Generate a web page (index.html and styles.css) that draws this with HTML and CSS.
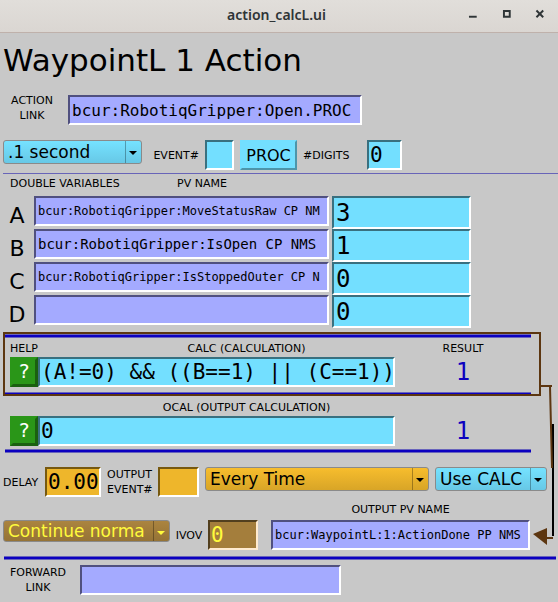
FILE: index.html
```html
<!DOCTYPE html>
<html lang="en">
<head>
<meta charset="utf-8">
<title>action_calcL.ui</title>
<link rel="stylesheet" href="styles.css">
</head>
<body>
<header class="titlebar">
  <span class="caption">action_calcL.ui</span>
  <div class="window-buttons">
    <button type="button" aria-label="Minimize"><svg viewBox="0 0 10 10"><path d="M1 7h8v2H1z"/></svg></button>
    <button type="button" aria-label="Maximize"><svg viewBox="0 0 10 10"><path fill-rule="evenodd" d="M1 1h8v8H1zM3 3v4h4V3z"/></svg></button>
    <button type="button" aria-label="Close"><svg viewBox="0 0 10 10"><path class="cross" d="M1.500 1.500l7 7M8.500 1.500l-7 7"/></svg></button>
  </div>
</header>
<main>
  <h1>WaypointL 1 Action</h1>

  <div class="action-row">
    <label for="action-link">ACTION<br>LINK</label>
    <input id="action-link" class="field link text-l" value="bcur:RobotiqGripper:Open.PROC">
  </div>

  <div class="scan-row">
    <div class="combo calc"><select aria-label="Scan rate"><option>.1 second</option></select></div>
    <label for="event" class="end">EVENT#</label>
    <input id="event" class="field calc">
    <button type="button" class="proc">PROC</button>
    <label for="digits" class="start">#DIGITS</label>
    <input id="digits" class="field calc text-xl" value="0">
  </div>
  <hr class="thin">

  <section class="variables">
    <div class="variable-heads"><span>DOUBLE VARIABLES</span><span>PV NAME</span></div>
    <div class="variable">
      <label for="pv-a">A</label>
      <input id="pv-a" class="field link text-s" value="bcur:RobotiqGripper:MoveStatusRaw CP NM">
      <input aria-label="Value of A" class="field calc tall" value="3">
    </div>
    <div class="variable">
      <label for="pv-b">B</label>
      <input id="pv-b" class="field link text-m" value="bcur:RobotiqGripper:IsOpen CP NMS">
      <input aria-label="Value of B" class="field calc tall" value="1">
    </div>
    <div class="variable">
      <label for="pv-c">C</label>
      <input id="pv-c" class="field link text-s" value="bcur:RobotiqGripper:IsStoppedOuter CP N">
      <input aria-label="Value of C" class="field calc tall" value="0">
    </div>
    <div class="variable">
      <label for="pv-d">D</label>
      <input id="pv-d" class="field link text-s">
      <input aria-label="Value of D" class="field calc tall" value="0">
    </div>
  </section>

  <div class="output-flow">
    <section class="calculation boxed">
      <hr class="rule">
      <div class="formula">
        <span>HELP</span><label for="calc">CALC (CALCULATION)</label><span>RESULT</span>
        <button type="button" class="help" aria-label="Help on CALC">?</button>
        <input id="calc" class="field calc text-xl" value="(A!=0) &amp;&amp; ((B==1) || (C==1))">
        <output for="calc">1</output>
      </div>
      <hr class="rule half">
    </section>

    <section class="calculation">
      <div class="formula">
        <span></span><label for="ocal">OCAL (OUTPUT CALCULATION)</label><span></span>
        <button type="button" class="help" aria-label="Help on OCAL">?</button>
        <input id="ocal" class="field calc text-xl" value="0">
        <output for="ocal">1</output>
      </div>
      <hr class="rule">
    </section>

    <div class="delay-row">
      <label for="delay" class="start">DELAY</label>
      <input id="delay" class="field output text-xl" value="0.00">
      <label for="out-event">OUTPUT<br>EVENT#</label>
      <input id="out-event" class="field output">
      <div class="combo output"><select aria-label="Output execute option"><option>Every Time</option></select></div>
      <div class="combo calc"><select aria-label="Output data option"><option>Use CALC</option></select></div>
    </div>

    <div class="invalid-row">
      <label for="out-pv" class="pv-label">OUTPUT PV NAME</label>
      <div class="combo invalid"><select aria-label="Invalid output action"><option>Continue norma</option></select></div>
      <label for="ivov">IVOV</label>
      <input id="ivov" class="field invalid text-xl" value="0">
      <input id="out-pv" class="field link text-s pv" value="bcur:WaypointL:1:ActionDone PP NMS">
    </div>

    <svg class="connector" viewBox="0 0 26 164" aria-hidden="true">
      <path class="black" d="M21 40V152"/>
      <path class="brown" d="M9 2H20M18 2L20 84M14 154H21"/>
      <path class="head" d="M1 150L15 144V161Z"/>
    </svg>
  </div>
  <hr class="rule wide">

  <div class="forward-row">
    <label for="forward">FORWARD<br>LINK</label>
    <input id="forward" class="field link text-l">
  </div>
</main>
</body>
</html>
```
FILE: styles.css
```css
* {
  box-sizing: border-box;
}

body {
  margin: 0;
  min-height: 100vh;
  background: #c8c8c8;
  color: #000;
  font: 11px/15px "DejaVu Sans", sans-serif;
}

button,
input,
select {
  margin: 0;
  min-width: 0;
  border-radius: 0;
  color: inherit;
  font: inherit;
}

/* Window frame */
.titlebar {
  display: grid;
  grid-template-columns: 85px 1fr 85px;
  align-items: center;
  height: 33px;
  padding-right: 5px;
  border-bottom: 1px solid #bfb1ab;
  background: linear-gradient(#e1deda, #dad6d2);
  color: #2e3436;
}

.caption {
  grid-column: 2;
  padding-bottom: 2px;
  font: 600 14px/20px "Noto Sans", sans-serif;
  text-align: center;
}

.window-buttons {
  display: flex;
  gap: 24px;
  justify-content: flex-end;
  padding: 0 8px 4px 0;
}

.window-buttons button {
  width: 10px;
  height: 10px;
  padding: 0;
  border: 0;
  background: none;
}

.window-buttons svg {
  display: block;
  fill: #2e3436;
}

.window-buttons .cross {
  fill: none;
  stroke: #2e3436;
  stroke-width: 2;
}

h1 {
  margin: 0;
  padding: 9px 3px 0;
  font-size: 31px;
  font-weight: 400;
  line-height: 36px;
}

label {
  text-align: center;
}

.start {
  text-align: left;
}

.end {
  text-align: right;
}

/* Sunken text fields */
.field {
  width: 100%;
  height: 30px;
  padding: 0 2px;
  border: 2px solid;
  font-family: "DejaVu Sans Mono", monospace;
}

.text-s { font-size: 12px; }
.text-m { font-size: 14px; }
.text-l { font-size: 16px; }
.text-xl { font-size: 21px; }

.field.link {
  border-color: #50507f #fff #fff #50507f;
  background: #a4aaff;
}

.field.calc {
  border-color: #39707f #fff #fff #39707f;
  background: #73dfff;
}

.field.output {
  border-color: #77590f #fff #fff #77590f;
  background: #eeb62b;
}

.field.invalid {
  border-color: #523f1e #ffebd0 #ffebd0 #523f1e;
  background: #a47e3c;
  color: #fffb3c;
}

.field.text-xl {
  padding: 0 1px;
}

.field.tall {
  height: 33px;
  font-size: 24px;
}

/* Drop-downs */
.combo {
  position: relative;
  align-self: start;
  height: 24px;
  border: 1px solid #8a8a8a;
  border-radius: 3px;
}

.combo select {
  display: block;
  width: 100%;
  height: 100%;
  padding: 0 16px 1px 4px;
  border: 0;
  background: none;
  font-size: 17px;
  line-height: 20px;
  appearance: none;
}

.combo::before {
  content: "";
  position: absolute;
  top: 0;
  right: 15px;
  bottom: 0;
  border-left: 1px solid #0000004d;
}

.combo::after {
  content: "";
  position: absolute;
  top: 10px;
  right: 4px;
  border: 4px solid transparent;
  border-top-color: currentColor;
  border-bottom: 0;
}

.combo.calc {
  background: linear-gradient(#75e2ff, #67c8e6);
}

.combo.output {
  background: linear-gradient(#f7bd2d, #d8a527);
}

.combo.invalid {
  height: 22px;
  background: linear-gradient(#ab843f, #957336);
  color: #fffb3c;
}

.action-row {
  display: grid;
  grid-template-columns: 58px 294fr 189fr;
  column-gap: 7px;
  align-items: end;
  margin-top: 15px;
  padding-left: 3px;
}

.action-row label {
  padding-bottom: 2px;
}

.scan-row {
  display: grid;
  grid-template-columns: 139fr 51px 29px 57px 58px 35px 150fr;
  column-gap: 6px;
  align-items: center;
  margin-top: 15px;
  padding-left: 3px;
}

.proc {
  height: 30px;
  padding: 0;
  border: 2px solid;
  border-color: #73dfff #4d95aa #4d95aa #73dfff;
  background: #73dfff;
  font-size: 16px;
}

hr {
  margin: 0;
  border: 0;
}

.thin {
  height: 1px;
  margin: 3px 0 0 3px;
  background: #6864b8;
}

.rule {
  height: 4px;
  border: solid #6864bc;
  border-width: 1px 0;
  background: #0c00c0;
}

.rule.half {
  height: 2px;
  border-width: 1px 0 0;
}

.rule.wide {
  margin: 6px 2px 0 4px;
}

/* Input variables */
.variable-heads,
.variable {
  display: grid;
  grid-template-columns: 28px 295fr 139fr 84fr;
  column-gap: 3px;
  padding-left: 3px;
}

.variable-heads {
  grid-template-columns: 164px 1fr;
  padding: 2px 0 5px 10px;
}

.variable {
  height: 33px;
}

.variable label {
  padding-top: 7px;
  font-size: 22px;
  line-height: 26px;
}

/* Calculations, with a gutter for the connector */
.output-flow {
  position: relative;
  padding: 4px 0 0 3px;
}

.calculation {
  margin-right: 17px;
  padding: 0 10px 0 2px;
}

.boxed {
  border: 2px solid #5c3610;
  padding: 0 8px 0 0;
}

.formula {
  display: grid;
  grid-template-columns: 28px 357fr 136fr;
  row-gap: 1px;
  align-items: center;
  padding: 3px 0 5px 5px;
  text-align: center;
}

.calculation:not(.boxed) .formula {
  padding: 4px 0 3px 5px;
}

.formula span {
  justify-self: center;
}

.formula label {
  padding-left: 60px;
}

.calculation:not(.boxed) span {
  height: 15px;
}

.help {
  height: 30px;
  padding: 0 0 2px;
  border: 3px solid;
  border-color: #2a9618 #1a6010 #1a6010 #2a9618;
  background: #2a9618;
  color: #fff;
  font: 20px/22px "DejaVu Sans Mono", monospace;
}

output {
  color: #0c00c0;
  font: 24px/28px "DejaVu Sans Mono", monospace;
}

/* Output settings */
.delay-row {
  display: grid;
  grid-template-columns: 36px 56px 45px 41px 224fr 112fr;
  column-gap: 6px;
  align-items: center;
  margin: 14px 11px 0 0;
}

.invalid-row {
  display: grid;
  grid-template-columns: 167fr 28px 50px 267fr;
  column-gap: 5px;
  align-items: center;
  margin: 5px 28px 0 0;
}

.pv-label {
  grid-column: 4;
  margin-bottom: 3px;
  padding-left: 8px;
}

.invalid-row .pv {
  width: auto;
  margin-left: 8px;
}

.connector {
  position: absolute;
  right: 0;
  bottom: 2px;
  width: 26px;
  height: 164px;
  pointer-events: none;
}

.connector path {
  fill: none;
  stroke-width: 2;
}

.connector .black { stroke: #000; }
.connector .brown { stroke: #5c3610; }
.connector .head { fill: #5c3610; }

.forward-row {
  display: grid;
  grid-template-columns: 70px 261fr 210fr;
  column-gap: 7px;
  align-items: center;
  margin-top: 5px;
  padding: 0 0 7px 3px;
}
```
